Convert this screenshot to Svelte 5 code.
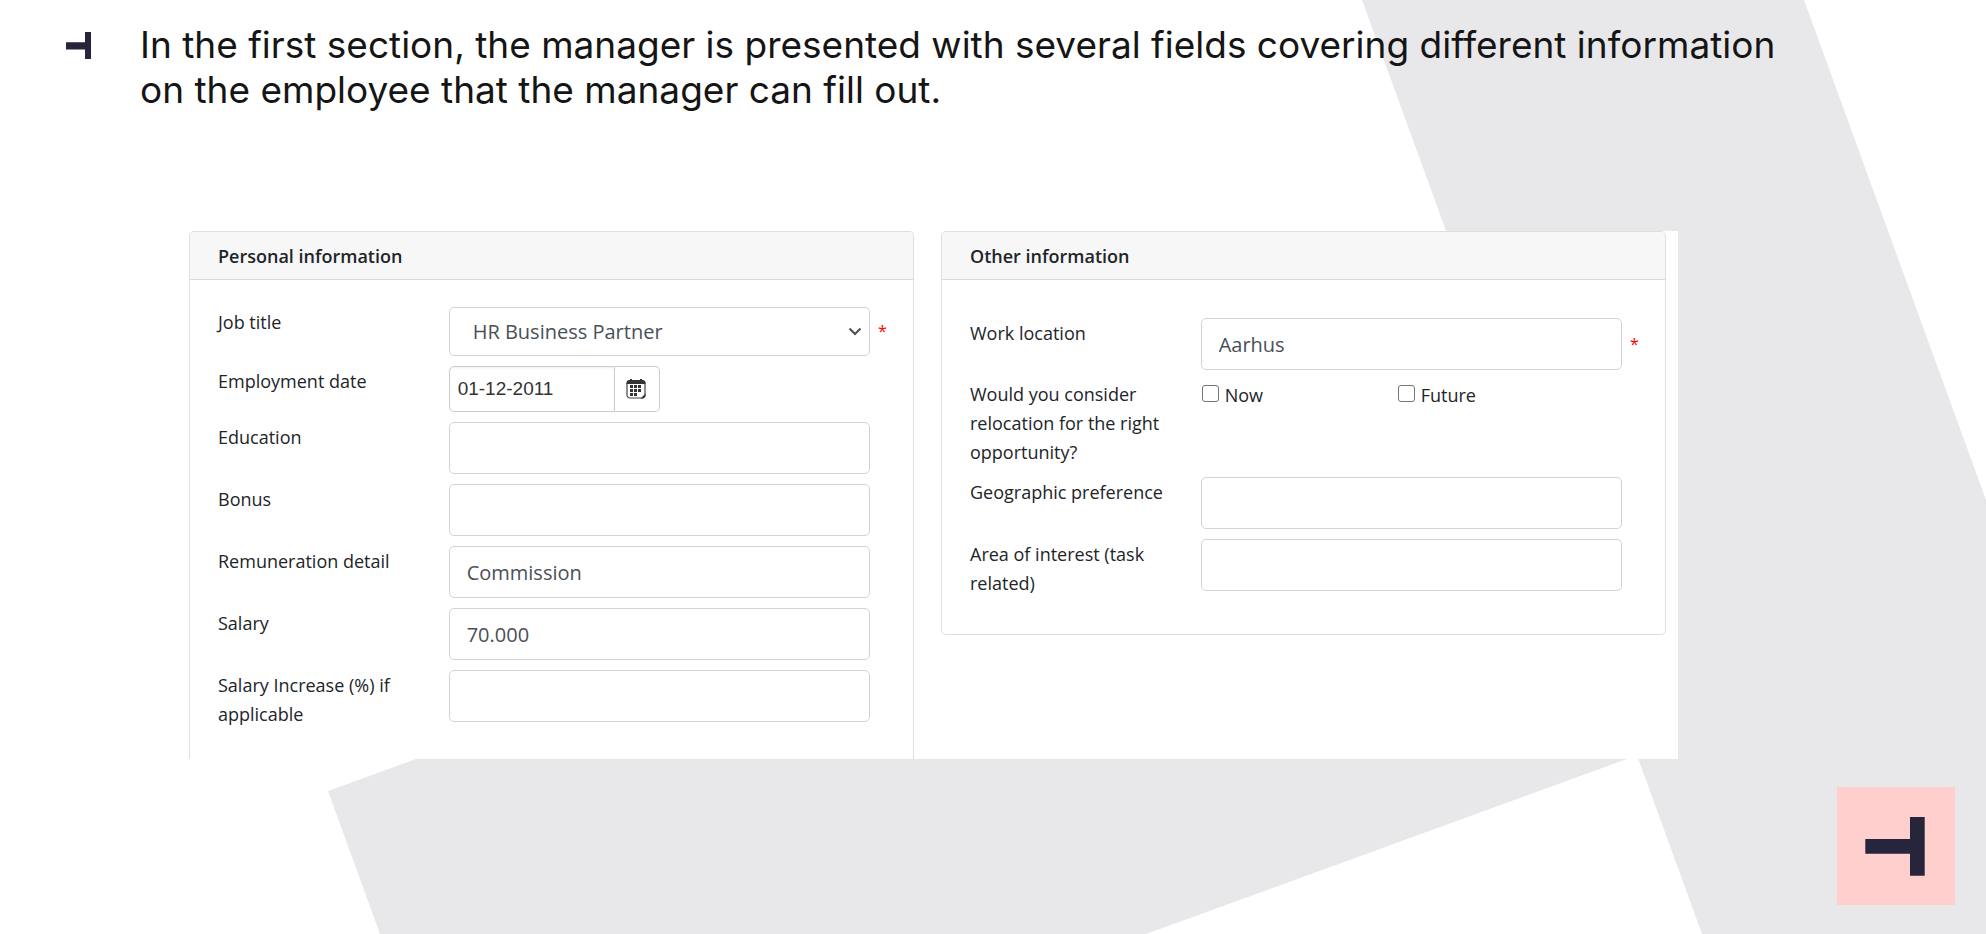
<script>
  let jobTitle = $state('HR Business Partner');
  let employmentDate = $state('01-12-2011');
  let workLocation = $state('Aarhus');
  let relocateNow = $state(false);
  let relocateFuture = $state(false);
  let geographic = $state('');
  let interest = $state('');

  let details = $state([
    { id: 'education', label: 'Education', value: '' },
    { id: 'bonus', label: 'Bonus', value: '' },
    { id: 'remuneration', label: 'Remuneration detail', value: 'Commission' },
    { id: 'salary', label: 'Salary', value: '70.000' },
    { id: 'increase', label: 'Salary Increase (%) if applicable', value: '' }
  ]);
</script>

<div class="slide">
  <svg class="backdrop" viewBox="0 0 1986 934" preserveAspectRatio="xMaxYMin slice" aria-hidden="true">
    <path fill="#e8e8ea" d="M1362 0H1804L1986 500V934H1702Z" />
    <path fill="#e8e8ea" d="M328 791L416 759L500 728H1627V759L1146 934H380Z" />
  </svg>

  <header class="intro">
    <svg class="marker" viewBox="0 0 25 27" aria-hidden="true">
      <path fill="#26253c" d="M19 0h6v27h-6v-9.500H0v-7.200h19z" />
    </svg>
    <p>
      In the first section, the manager is presented with several fields covering different information
      on the employee that the manager can fill out.
    </p>
  </header>

  <main class="sheet">
    <section class="card open">
      <h2>Personal information</h2>
      <div class="rows">
        <div class="row">
          <label for="job">Job title</label>
          <div class="picker">
            <select id="job" bind:value={jobTitle}>
              <option>HR Business Partner</option>
              <option>HR Manager</option>
            </select>
            <svg class="chevron" viewBox="0 0 14 9" aria-hidden="true">
              <path d="M1.500 1.500L7 7l5.500-5.500" fill="none" stroke="#495057" stroke-width="2" />
            </svg>
          </div>
          <span class="required">*</span>
        </div>
        <div class="row">
          <label for="date">Employment date</label>
          <div class="date">
            <input id="date" type="text" bind:value={employmentDate} />
            <button type="button" aria-label="Open calendar">
              <svg viewBox="0 0 20 20" aria-hidden="true">
                <rect x="1" y="2" width="18" height="17" rx="3" fill="#fff" stroke="#444" stroke-width="1.200" />
                <path fill="#333" d="M0.500 5V4a3 3 0 0 1 3-3H4V0h2v1h8V0h2v1h0.500a3 3 0 0 1 3 3v1z" />
                <path fill="#333" d="M4 6h3v3H4zM8 6h3v3H8zM12 6h3v3h-3zM4 10h3v3H4zM8 10h3v3H8zM12 10h3v3h-3zM4 14h3v3H4zM8 14h3v3H8zM19.500 14.500l-5 5h2.500l2.500-2.500z" />
              </svg>
            </button>
          </div>
        </div>
        {#each details as field (field.id)}
          <div class="row">
            <label for={field.id}>{field.label}</label>
            <input class="field" id={field.id} type="text" bind:value={field.value} />
          </div>
        {/each}
      </div>
    </section>

    <section class="card">
      <h2>Other information</h2>
      <div class="rows spaced">
        <div class="row">
          <label for="location">Work location</label>
          <input class="field" id="location" type="text" bind:value={workLocation} />
          <span class="required">*</span>
        </div>
        <div class="row" role="group" aria-labelledby="relocation">
          <span class="label" id="relocation">Would you consider relocation for the right opportunity?</span>
          <div class="choices">
            <label><input type="checkbox" bind:checked={relocateNow} />Now</label>
            <label><input type="checkbox" bind:checked={relocateFuture} />Future</label>
          </div>
        </div>
        <div class="row">
          <label for="geo">Geographic preference</label>
          <input class="field" id="geo" type="text" bind:value={geographic} />
        </div>
        <div class="row">
          <label for="interest">Area of interest (task related)</label>
          <input class="field" id="interest" type="text" bind:value={interest} />
        </div>
      </div>
    </section>
  </main>

  <svg class="logo" viewBox="0 0 118 118" role="img" aria-label="Logo">
    <path fill="#ffcfcd" d="M0 0h118v118H0z" />
    <path fill="#26253c" d="M73 30h14.700v58.700H73V66.700H28.300V52H73z" />
  </svg>
</div>

<style>
  :global(body) {
    margin: 0;
    background: #fff;
  }

  .slide {
    position: relative;
    box-sizing: border-box;
    min-height: 100vh;
    overflow: hidden;
    font-family: 'Open Sans', 'Noto Sans', sans-serif;
    font-size: 18px;
    line-height: 29px;
    color: #212529;
  }

  .backdrop {
    position: absolute;
    inset: 0;
    width: 100%;
    height: 100%;
  }

  .intro {
    position: relative;
    display: flex;
    gap: 49px;
    padding: 22px 180px 0 66px;
  }

  .marker {
    flex: none;
    width: 25px;
    height: 27px;
    margin-top: 10px;
  }

  .intro p {
    margin: 0;
    font-family: Inter, sans-serif;
    font-size: 37px;
    line-height: 45px;
    color: #151515;
  }

  .sheet {
    position: relative;
    display: grid;
    grid-template-columns: 1fr 1fr;
    align-items: start;
    gap: 27px;
    margin: 119px 308px 0 189px;
    padding-right: 12px;
    background: #fff;
  }

  .card {
    border: 1px solid #dfdfdf;
    border-radius: 5px;
    background: #fff;
  }

  .card.open {
    border-bottom: 0;
    border-radius: 5px 5px 0 0;
  }

  h2 {
    margin: 0;
    padding: 10px 28px 8px;
    border-bottom: 1px solid #d9d9d9;
    border-radius: 4px 4px 0 0;
    background: #f7f7f7;
    font-size: 18px;
    font-weight: 600;
    line-height: 29px;
  }

  .rows {
    display: flex;
    flex-direction: column;
    gap: 10px;
    padding: 27px 0 30px 28px;
  }

  .rows.spaced {
    padding: 38px 0 36px 28px;
  }

  .row {
    display: grid;
    grid-template-columns: minmax(0, 231fr) minmax(0, 422fr) 43px;
    align-items: start;
  }

  .row > label,
  .label {
    padding-right: 24px;
  }

  .row > label {
    padding-top: 1px;
  }

  input,
  select,
  button {
    box-sizing: border-box;
    margin: 0;
    font-family: inherit;
    color: #495057;
    background: #fff;
  }

  .field,
  select {
    width: 100%;
    height: 52px;
    padding: 0 17px;
    border: 1px solid #ced4da;
    border-radius: 5px;
    font-size: 20px;
  }

  .picker {
    display: grid;
    align-items: center;
  }

  .picker > * {
    grid-area: 1 / 1;
  }

  select {
    height: 49px;
    padding: 0 23px;
    appearance: none;
  }

  .chevron {
    justify-self: end;
    width: 14px;
    height: 9px;
    margin-right: 8px;
    pointer-events: none;
  }

  .required {
    align-self: center;
    padding-left: 8px;
    font-size: 16px;
    color: #f00;
  }

  .date {
    display: flex;
    width: 211px;
    height: 46px;
  }

  .date input {
    flex: 1;
    min-width: 0;
    padding: 0 8px;
    border: 1px solid #ccc;
    border-radius: 5px 0 0 5px;
    box-shadow: inset 0 1px 2px #0001;
    font-family: 'Liberation Sans', Arial, sans-serif;
    font-size: 19px;
    color: #333;
  }

  .date button {
    display: grid;
    place-items: center;
    width: 45px;
    padding: 0 2px 0 0;
    border: 1px solid #ccc;
    border-left: 0;
    border-radius: 0 5px 5px 0;
  }

  .date svg {
    width: 20px;
    height: 20px;
  }

  .choices {
    display: grid;
    grid-template-columns: 196px 1fr;
  }

  .choices label {
    display: flex;
    align-items: center;
    gap: 6px;
    padding-top: 1px;
  }

  .choices input {
    appearance: none;
    width: 17px;
    height: 17px;
    margin: 0 0 4px 1px;
    border: 1px solid #767676;
    border-radius: 3px;
  }

  .choices input:checked {
    background: #0d6efd;
  }

  .logo {
    position: absolute;
    right: 31px;
    bottom: 29px;
    width: 118px;
    height: 118px;
  }
</style>
